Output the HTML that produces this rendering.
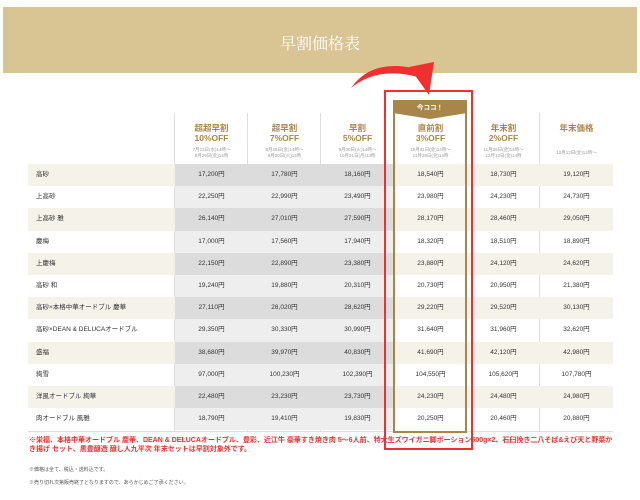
<!DOCTYPE html>
<html><head><meta charset="utf-8"><style>
*{margin:0;padding:0;box-sizing:border-box}
body{width:640px;height:500px;background:#fff;position:relative;overflow:hidden;font-family:"Liberation Sans","Noto Sans CJK JP",sans-serif;color:#333}
.band{position:absolute;left:3px;top:7px;width:634px;height:66px;background:#d9c494}
.band div{position:absolute;left:0;right:0;top:24px;text-align:center;color:#fff;font-family:"Liberation Serif","Noto Serif CJK SC",serif;font-size:16px}
.sep{position:absolute;top:113px;height:318px;width:1px;background:#dedede}
.hd{position:absolute;top:123px;width:73px;text-align:center;color:#a8864a;font-weight:bold;font-size:8.5px;line-height:10px}
.dt{position:absolute;top:147px;width:73px;text-align:center;color:#999;font-size:4.5px;line-height:6px}
.row{position:absolute;left:28px;width:585px;height:22.2px}
.row.o{background:#f5f2ea}
.row span{position:absolute;top:0;line-height:22px;font-size:6.5px;color:#333}
.row .l{left:8px}
.row .c{width:73px;text-align:center;height:22.2px}
.g1{background:#dcdcdc}.g2{background:#eeeeee}
</style></head><body>
<div class="band"><div>早割価格表</div></div>

<div class="sep" style="left:174px"></div>
<div class="sep" style="left:247px"></div>
<div class="sep" style="left:320px"></div>
<div class="sep" style="left:539px"></div>

<div class="hd" style="left:175px">超超早割<br>10%OFF</div>
<div class="hd" style="left:248px">超早割<br>7%OFF</div>
<div class="hd" style="left:321px">早割<br>5%OFF</div>
<div class="hd" style="left:394px">直前割<br>3%OFF</div>
<div class="hd" style="left:467px">年末割<br>2%OFF</div>
<div class="hd" style="left:540px">年末価格</div>

<div class="dt" style="left:175px">7月23日(水)14時〜<br>8月29日(金)14時</div>
<div class="dt" style="left:248px">8月29日(金)14時〜<br>9月30日(火)14時</div>
<div class="dt" style="left:321px">9月30日(火)14時〜<br>10月31日(月)14時</div>
<div class="dt" style="left:394px">10月31日(金)14時〜<br>11月28日(金)14時</div>
<div class="dt" style="left:467px">11月28日(金)14時〜<br>12月12日(金)14時</div>
<div class="dt" style="left:540px;top:150px">12月12日(金)14時〜</div>

<div class="row o" style="top:164.0px"><span class="l">高砂</span><span class="c g1" style="left:147px">17,200円</span><span class="c g1" style="left:220px">17,780円</span><span class="c g1" style="left:293px">18,160円</span><span class="c" style="left:366px">18,540円</span><span class="c" style="left:439px">18,730円</span><span class="c" style="left:512px">19,120円</span></div>
<div class="row" style="top:186.2px"><span class="l">上高砂</span><span class="c g2" style="left:147px">22,250円</span><span class="c g2" style="left:220px">22,990円</span><span class="c g2" style="left:293px">23,490円</span><span class="c" style="left:366px">23,980円</span><span class="c" style="left:439px">24,230円</span><span class="c" style="left:512px">24,730円</span></div>
<div class="row o" style="top:208.4px"><span class="l">上高砂 雅</span><span class="c g1" style="left:147px">26,140円</span><span class="c g1" style="left:220px">27,010円</span><span class="c g1" style="left:293px">27,590円</span><span class="c" style="left:366px">28,170円</span><span class="c" style="left:439px">28,460円</span><span class="c" style="left:512px">29,050円</span></div>
<div class="row" style="top:230.6px"><span class="l">慶梅</span><span class="c g2" style="left:147px">17,000円</span><span class="c g2" style="left:220px">17,560円</span><span class="c g2" style="left:293px">17,940円</span><span class="c" style="left:366px">18,320円</span><span class="c" style="left:439px">18,510円</span><span class="c" style="left:512px">18,890円</span></div>
<div class="row o" style="top:252.8px"><span class="l">上慶梅</span><span class="c g1" style="left:147px">22,150円</span><span class="c g1" style="left:220px">22,890円</span><span class="c g1" style="left:293px">23,380円</span><span class="c" style="left:366px">23,880円</span><span class="c" style="left:439px">24,120円</span><span class="c" style="left:512px">24,620円</span></div>
<div class="row" style="top:275.0px"><span class="l">高砂 和</span><span class="c g2" style="left:147px">19,240円</span><span class="c g2" style="left:220px">19,880円</span><span class="c g2" style="left:293px">20,310円</span><span class="c" style="left:366px">20,730円</span><span class="c" style="left:439px">20,950円</span><span class="c" style="left:512px">21,380円</span></div>
<div class="row o" style="top:297.2px"><span class="l">高砂×本格中華オードブル 慶華</span><span class="c g1" style="left:147px">27,110円</span><span class="c g1" style="left:220px">28,020円</span><span class="c g1" style="left:293px">28,620円</span><span class="c" style="left:366px">29,220円</span><span class="c" style="left:439px">29,520円</span><span class="c" style="left:512px">30,130円</span></div>
<div class="row" style="top:319.4px"><span class="l">高砂×DEAN &amp; DELUCAオードブル</span><span class="c g2" style="left:147px">29,350円</span><span class="c g2" style="left:220px">30,330円</span><span class="c g2" style="left:293px">30,990円</span><span class="c" style="left:366px">31,640円</span><span class="c" style="left:439px">31,960円</span><span class="c" style="left:512px">32,620円</span></div>
<div class="row o" style="top:341.6px"><span class="l">盛福</span><span class="c g1" style="left:147px">38,680円</span><span class="c g1" style="left:220px">39,970円</span><span class="c g1" style="left:293px">40,830円</span><span class="c" style="left:366px">41,690円</span><span class="c" style="left:439px">42,120円</span><span class="c" style="left:512px">42,980円</span></div>
<div class="row" style="top:363.8px"><span class="l">絢雪</span><span class="c g2" style="left:147px">97,000円</span><span class="c g2" style="left:220px">100,230円</span><span class="c g2" style="left:293px">102,390円</span><span class="c" style="left:366px">104,550円</span><span class="c" style="left:439px">105,620円</span><span class="c" style="left:512px">107,780円</span></div>
<div class="row o" style="top:386.0px"><span class="l">洋風オードブル 絢華</span><span class="c g1" style="left:147px">22,480円</span><span class="c g1" style="left:220px">23,230円</span><span class="c g1" style="left:293px">23,730円</span><span class="c" style="left:366px">24,230円</span><span class="c" style="left:439px">24,480円</span><span class="c" style="left:512px">24,980円</span></div>
<div class="row" style="top:408.2px"><span class="l">肉オードブル 風雅</span><span class="c g2" style="left:147px">18,790円</span><span class="c g2" style="left:220px">19,410円</span><span class="c g2" style="left:293px">19,830円</span><span class="c" style="left:366px">20,250円</span><span class="c" style="left:439px">20,460円</span><span class="c" style="left:512px">20,880円</span></div>
<div style="position:absolute;left:28px;top:431px;width:585px;height:1px;background:#ddd"></div>

<div style="position:absolute;left:393px;top:100px;width:74px;height:333px;border:2px solid #a8864a"></div>
<svg style="position:absolute;left:393px;top:100px" width="74" height="22"><polygon points="0,0 74,0 74,13 37,19 0,13" fill="#a8864a"/><text x="37" y="9.5" text-anchor="middle" fill="#fff" font-size="6.5" font-weight="bold" font-family="Liberation Sans,Noto Sans CJK JP,sans-serif">今ココ！</text></svg>
<div style="position:absolute;left:384px;top:90px;width:89px;height:360px;border:2.5px solid #f03030"></div>
<svg style="position:absolute;left:0;top:0" width="640" height="120"><path d="M351,88 Q372,58 417,69 L418,77 Q378,66 351,88 Z" fill="#f03030"/><polygon points="409,67 434,62 429,95" fill="#f03030"/></svg>

<div style="position:absolute;left:29px;top:436px;white-space:nowrap;color:#e83030;font-weight:bold;font-size:7px;line-height:9px">※栄福、本格中華オードブル 慶華、DEAN &amp; DELUCAオードブル、豊彩、近江牛 豪華すき焼き肉 5〜6人前、特大生ズワイガニ脚ポーション500g×2、石臼挽き二八そば&amp;えび天と野菜か<br>き揚げ セット、黒豊醸造 醸し人九平次 年末セットは早割対象外です。</div>
<div style="position:absolute;left:29px;top:466px;color:#555;font-size:5px">※価格は全て、税込・送料込です。</div>
<div style="position:absolute;left:29px;top:479px;color:#555;font-size:5px">※売り切れ次第販売終了となりますので、あらかじめご了承ください。</div>
</body></html>
